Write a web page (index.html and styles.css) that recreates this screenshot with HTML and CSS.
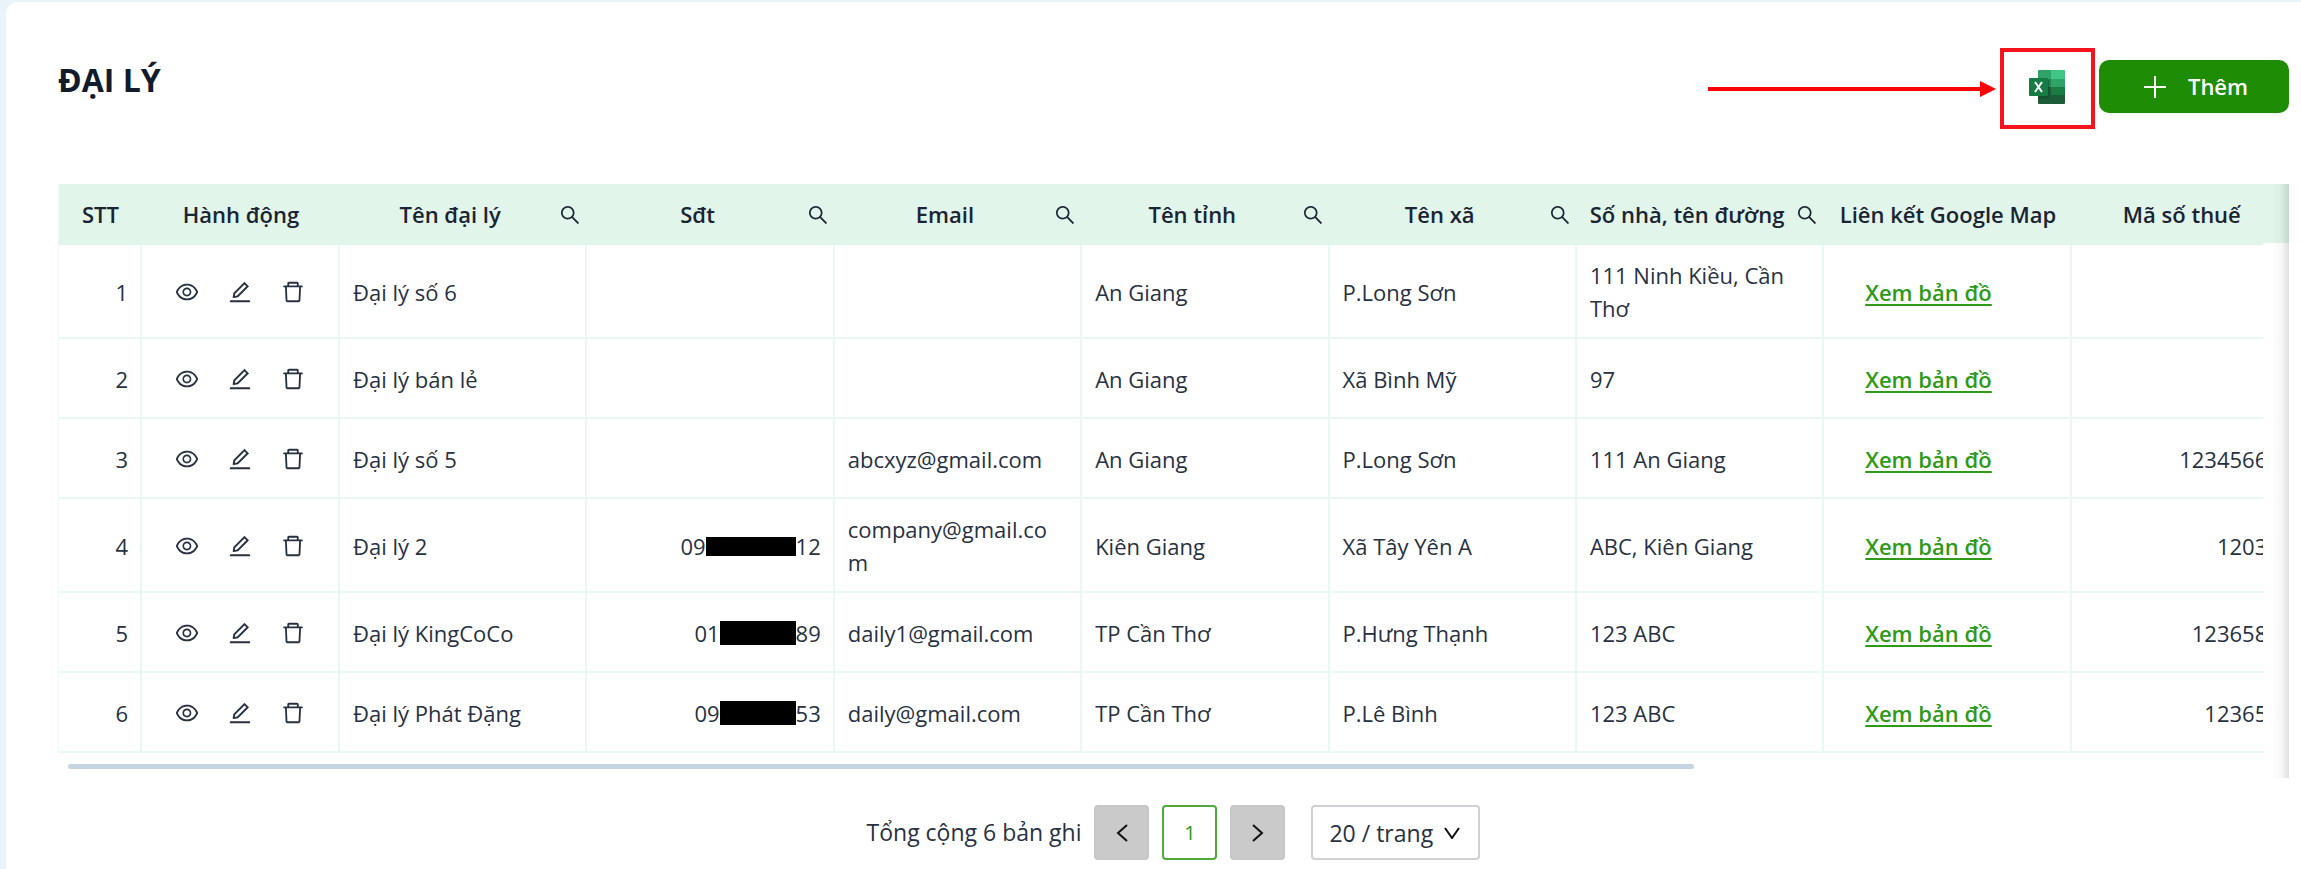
FILE: index.html
```
<!DOCTYPE html>
<html lang="vi">

<head>
    <meta charset="UTF-8">
    <meta name="viewport" content="width=device-width, initial-scale=1.0">
    <title>Đại lý</title>
    <link rel="stylesheet" href="styles.css">
</head>

<body>
    <!-- Icons -->
    <svg class="sprite" xmlns="http://www.w3.org/2000/svg">
        <symbol id="icon-eye" viewBox="0 0 1024 1024">
            <path d="M942.2 486.2C847.4 286.5 704.1 186 512 186c-192.2 0-335.4 100.5-430.2 300.3a60.3 60.3 0 000 51.5C176.6 737.5 319.9 838 512 838c192.2 0 335.4-100.5 430.2-300.3 7.7-16.2 7.7-35 0-51.5zM512 766c-161.3 0-279.4-81.8-362.7-254C232.6 339.8 350.7 258 512 258c161.3 0 279.4 81.8 362.7 254C791.5 684.2 673.4 766 512 766zm-4-430c-97.2 0-176 78.8-176 176s78.8 176 176 176 176-78.8 176-176-78.8-176-176-176zm0 288c-61.9 0-112-50.1-112-112s50.1-112 112-112 112 50.1 112 112-50.1 112-112 112z"/>
        </symbol>
        <symbol id="icon-edit" viewBox="0 0 1024 1024">
            <path d="M257.7 752c2 0 4-.2 6-.5L431.9 722c2-.4 3.9-1.3 5.3-2.8l423.9-423.9a9.96 9.96 0 000-14.1L694.9 114.9c-1.9-1.9-4.4-2.9-7.1-2.9s-5.2 1-7.1 2.9L256.8 538.8c-1.5 1.5-2.4 3.3-2.8 5.3l-29.5 168.2a33.5 33.5 0 009.4 29.8c6.6 6.4 14.9 9.9 23.8 9.9zm67.4-174.4L687.8 215l73.3 73.3-362.7 362.6-88.9 15.7 15.6-89zM880 836H144c-17.7 0-32 14.3-32 32v36c0 4.4 3.6 8 8 8h784c4.4 0 8-3.6 8-8v-36c0-17.7-14.3-32-32-32z"/>
        </symbol>
        <symbol id="icon-delete" viewBox="0 0 1024 1024">
            <path d="M360 184h-8c4.4 0 8-3.6 8-8v8h304v-8c0 4.4 3.6 8 8 8h-8v72h72v-80c0-35.3-28.7-64-64-64H352c-35.3 0-64 28.7-64 64v80h72v-72zm504 72H160c-17.7 0-32 14.3-32 32v32c0 4.4 3.6 8 8 8h60.4l24.7 523c1.6 34.1 29.8 61 63.9 61h454c34.2 0 62.3-26.8 63.9-61l24.7-523H888c4.4 0 8-3.6 8-8v-32c0-17.7-14.3-32-32-32zM731.3 840H292.7l-24.2-512h487l-24.2 512z"/>
        </symbol>
        <symbol id="icon-search" viewBox="112 112 800 800">
            <path d="M909.6 854.5L649.9 594.8C690.2 542.7 712 479 712 412c0-80.2-31.3-155.4-87.9-212.1-56.6-56.7-132-87.9-212.1-87.9s-155.5 31.3-212.1 87.9C143.2 256.5 112 331.8 112 412c0 80.1 31.3 155.5 87.9 212.1C256.5 680.8 331.8 712 412 712c67 0 130.6-21.8 182.7-62l259.7 259.6a8.2 8.2 0 0011.6 0l43.6-43.5a8.2 8.2 0 000-11.6zM570.4 570.4C528 612.7 471.8 636 412 636s-116-23.3-158.4-65.6C211.3 528 188 471.8 188 412s23.3-116.1 65.6-158.4C296 211.3 352.2 188 412 188s116.1 23.2 158.4 65.6S636 352.2 636 412s-23.3 116.1-65.6 158.4z"/>
        </symbol>
    </svg>

    <main class="card">
        <header class="card-header">
            <h1>ĐẠI LÝ</h1>
            <div class="toolbar">
                <svg class="arrow" width="288" height="16" viewBox="0 0 288 16">
                    <path d="M0 6h272V0l16 8-16 8v-6H0z" fill="#ff0000"/>
                </svg>
                <button class="export-button" type="button" aria-label="Xuất Excel">
                    <svg width="36" height="34" viewBox="0 0 36 34">
                        <path d="M10 0h12v9H9V1a1 1 0 0 1 1-1z" fill="#2ea268"/>
                        <path d="M22 0h13a1 1 0 0 1 1 1v8H22z" fill="#3fc584"/>
                        <path d="M9 9h13v8H9z" fill="#1d8650"/>
                        <path d="M22 9h14v8H22z" fill="#30a368"/>
                        <path d="M9 17h13v8H9z" fill="#185b38"/>
                        <path d="M22 17h14v8H22z" fill="#1b7b45"/>
                        <path d="M9 25h27v8a1 1 0 0 1-1 1H10a1 1 0 0 1-1-1z" fill="#1c5c38"/>
                        <path d="M9 9h9a2 2 0 0 1 2 2v16a2 2 0 0 1-2 2H9z" fill="#0f4a2b" opacity=".5"/>
                        <rect y="8" width="19" height="18" rx="1" fill="#177c44"/>
                        <path d="M6 12l7 10M13 12L6 22" stroke="#fff" stroke-width="2"/>
                    </svg>
                </button>
                <button class="add-button" type="button">
                    <svg width="22" height="22" viewBox="0 0 22 22">
                        <path d="M11 0v22M0 11h22" stroke="#fff" stroke-width="2"/>
                    </svg>
                    Thêm
                </button>
            </div>
        </header>

        <div class="table-wrapper">
            <div class="table-scroll">
                <table>
                    <colgroup>
                        <col class="col-index">
                        <col class="col-actions">
                        <col span="8">
                    </colgroup>
                    <thead>
                        <tr>
                            <th>STT</th>
                            <th>Hành động</th>
                            <th><div class="filter"><span>Tên đại lý</span><button type="button" aria-label="Tìm tên đại lý"><svg><use href="#icon-search"/></svg></button></div></th>
                            <th><div class="filter"><span>Sđt</span><button type="button" aria-label="Tìm sđt"><svg><use href="#icon-search"/></svg></button></div></th>
                            <th><div class="filter"><span>Email</span><button type="button" aria-label="Tìm email"><svg><use href="#icon-search"/></svg></button></div></th>
                            <th><div class="filter"><span>Tên tỉnh</span><button type="button" aria-label="Tìm tên tỉnh"><svg><use href="#icon-search"/></svg></button></div></th>
                            <th><div class="filter"><span>Tên xã</span><button type="button" aria-label="Tìm tên xã"><svg><use href="#icon-search"/></svg></button></div></th>
                            <th><div class="filter"><span>Số nhà, tên đường</span><button type="button" aria-label="Tìm địa chỉ"><svg><use href="#icon-search"/></svg></button></div></th>
                            <th>Liên kết Google Map</th>
                            <th><div class="filter"><span>Mã số thuế</span><button type="button" aria-label="Tìm mã số thuế"><svg><use href="#icon-search"/></svg></button></div></th>
                        </tr>
                    </thead>
                    <tbody>
                        <tr>
                            <td class="number">1</td>
                            <td><div class="actions"><button type="button" aria-label="Xem"><svg><use href="#icon-eye"/></svg></button><button type="button" aria-label="Sửa"><svg><use href="#icon-edit"/></svg></button><button type="button" aria-label="Xóa"><svg><use href="#icon-delete"/></svg></button></div></td>
                            <td>Đại lý số 6</td>
                            <td class="number"></td>
                            <td></td>
                            <td>An Giang</td>
                            <td>P.Long Sơn</td>
                            <td>111 Ninh Kiều, Cần Thơ</td>
                            <td class="map"><a href="#">Xem bản đồ</a></td>
                            <td class="number"></td>
                        </tr>
                        <tr>
                            <td class="number">2</td>
                            <td><div class="actions"><button type="button" aria-label="Xem"><svg><use href="#icon-eye"/></svg></button><button type="button" aria-label="Sửa"><svg><use href="#icon-edit"/></svg></button><button type="button" aria-label="Xóa"><svg><use href="#icon-delete"/></svg></button></div></td>
                            <td>Đại lý bán lẻ</td>
                            <td class="number"></td>
                            <td></td>
                            <td>An Giang</td>
                            <td>Xã Bình Mỹ</td>
                            <td>97</td>
                            <td class="map"><a href="#">Xem bản đồ</a></td>
                            <td class="number"></td>
                        </tr>
                        <tr>
                            <td class="number">3</td>
                            <td><div class="actions"><button type="button" aria-label="Xem"><svg><use href="#icon-eye"/></svg></button><button type="button" aria-label="Sửa"><svg><use href="#icon-edit"/></svg></button><button type="button" aria-label="Xóa"><svg><use href="#icon-delete"/></svg></button></div></td>
                            <td>Đại lý số 5</td>
                            <td class="number"></td>
                            <td>abcxyz@gmail.com</td>
                            <td>An Giang</td>
                            <td>P.Long Sơn</td>
                            <td>111 An Giang</td>
                            <td class="map"><a href="#">Xem bản đồ</a></td>
                            <td class="number">1234566000</td>
                        </tr>
                        <tr>
                            <td class="number">4</td>
                            <td><div class="actions"><button type="button" aria-label="Xem"><svg><use href="#icon-eye"/></svg></button><button type="button" aria-label="Sửa"><svg><use href="#icon-edit"/></svg></button><button type="button" aria-label="Xóa"><svg><use href="#icon-delete"/></svg></button></div></td>
                            <td>Đại lý 2</td>
                            <td class="number"><div class="phone">09<span class="mask mask-long"></span>12</div></td>
                            <td>company@gmail.com</td>
                            <td>Kiên Giang</td>
                            <td>Xã Tây Yên A</td>
                            <td>ABC, Kiên Giang</td>
                            <td class="map"><a href="#">Xem bản đồ</a></td>
                            <td class="number">1203000</td>
                        </tr>
                        <tr>
                            <td class="number">5</td>
                            <td><div class="actions"><button type="button" aria-label="Xem"><svg><use href="#icon-eye"/></svg></button><button type="button" aria-label="Sửa"><svg><use href="#icon-edit"/></svg></button><button type="button" aria-label="Xóa"><svg><use href="#icon-delete"/></svg></button></div></td>
                            <td>Đại lý KingCoCo</td>
                            <td class="number"><div class="phone">01<span class="mask"></span>89</div></td>
                            <td>daily1@gmail.com</td>
                            <td>TP Cần Thơ</td>
                            <td>P.Hưng Thạnh</td>
                            <td>123 ABC</td>
                            <td class="map"><a href="#">Xem bản đồ</a></td>
                            <td class="number">123658000</td>
                        </tr>
                        <tr>
                            <td class="number">6</td>
                            <td><div class="actions"><button type="button" aria-label="Xem"><svg><use href="#icon-eye"/></svg></button><button type="button" aria-label="Sửa"><svg><use href="#icon-edit"/></svg></button><button type="button" aria-label="Xóa"><svg><use href="#icon-delete"/></svg></button></div></td>
                            <td>Đại lý Phát Đặng</td>
                            <td class="number"><div class="phone">09<span class="mask"></span>53</div></td>
                            <td>daily@gmail.com</td>
                            <td>TP Cần Thơ</td>
                            <td>P.Lê Bình</td>
                            <td>123 ABC</td>
                            <td class="map"><a href="#">Xem bản đồ</a></td>
                            <td class="number">12365000</td>
                        </tr>
                    </tbody>
                </table>
                <div class="scrollbar"><div class="scrollbar-thumb"></div></div>
            </div>
            <div class="table-edge"></div>
        </div>

        <nav class="pagination" aria-label="Phân trang">
            <span>Tổng cộng 6 bản ghi</span>
            <button class="page-button page-nav" type="button" aria-label="Trang trước">
                <svg width="12" height="18" viewBox="0 0 12 18"><path d="M11 1L2 9l9 8"/></svg>
            </button>
            <button class="page-button page-current" type="button">1</button>
            <button class="page-button page-nav" type="button" aria-label="Trang sau">
                <svg width="12" height="18" viewBox="0 0 12 18"><path d="M1 1l9 8-9 8"/></svg>
            </button>
            <div class="page-size">
                <select aria-label="Số bản ghi mỗi trang">
                    <option>20 / trang</option>
                </select>
                <svg width="16" height="12" viewBox="0 0 16 12"><path d="M1 1l7 10 7-10"/></svg>
            </div>
        </nav>
    </main>
</body>

</html>
```
FILE: styles.css
```
* {
    box-sizing: border-box;
}

body {
    margin: 0;
    padding: 2px 0 0 6px;
    min-height: 100vh;
    display: flex;
    background-color: #e8f3fa;
    color: #273142;
    font-family: "Open Sans", "Noto Sans", sans-serif;
    font-size: 22px;
    line-height: 33px;
}

button,
select {
    font: inherit;
    color: inherit;
    cursor: pointer;
}

button {
    padding: 0;
    border: none;
    background: none;
}

svg {
    display: block;
    fill: currentColor;
}

.sprite {
    position: absolute;
    width: 0;
    height: 0;
}

.card {
    flex: 1;
    min-width: 0;
    padding: 46px 12px 8px 52px;
    border-radius: 12px 0 0 0;
    background-color: #fff;
}

.card-header {
    display: flex;
    justify-content: space-between;
    margin-bottom: 55px;
}

h1 {
    margin: 12px 0 0;
    color: #111b2b;
    font-size: 32px;
    font-weight: 700;
    line-height: 40px;
}

.toolbar {
    display: flex;
    align-items: center;
    gap: 4px;
}

.export-button {
    display: flex;
    align-items: center;
    justify-content: center;
    width: 95px;
    height: 81px;
    border: 4px solid #f5141e;
    padding: 0 2px 4px 0;
}

.add-button {
    display: flex;
    align-items: center;
    justify-content: center;
    gap: 22px;
    width: 190px;
    height: 53px;
    margin-bottom: 4px;
    padding-left: 4px;
    border-radius: 10px;
    background-color: #1e8c05;
    box-shadow: 0 3px 2px rgba(0, 0, 0, 0.04);
    color: #fff;
    font-weight: 600;
}

/* Table */
.table-wrapper {
    display: flex;
    margin-bottom: 27px;
}

.table-scroll {
    flex: 1;
    min-width: 0;
    overflow: hidden;
}

.table-edge {
    width: 26px;
    background: linear-gradient(to right, rgba(0, 0, 0, 0) 35%, rgba(0, 0, 0, 0.03) 70%, rgba(0, 0, 0, 0.12)), linear-gradient(#e1f5ea, #e1f5ea) top / 100% 59px no-repeat;
}

table {
    width: 2261px;
    table-layout: fixed;
    border-collapse: separate;
    border-spacing: 0;
    border-left: 1px solid #eef9f5;
}

.col-index {
    width: 83px;
}

.col-actions {
    width: 198px;
}

th {
    height: 61px;
    padding: 0 8px;
    background-color: #e1f5ea;
    color: #1a2433;
    font-weight: 600;
    white-space: nowrap;
}

td {
    height: 80px;
    padding: 14px 14px 12px 13px;
    border-right: 2px solid #e9f8f2;
    border-bottom: 2px solid #e9f8f2;
    overflow-wrap: anywhere;
}

.number {
    padding-right: 12px;
    text-align: right;
}

.filter {
    display: flex;
    align-items: center;
    gap: 12px;
    padding-left: 3px;
}

.filter span {
    flex: 1;
}

.filter svg {
    width: 18px;
    height: 18px;
}

.actions {
    display: flex;
    justify-content: center;
    gap: 27px;
}

.actions svg {
    width: 26px;
    height: 26px;
}

.phone {
    display: flex;
    align-items: center;
    justify-content: flex-end;
}

.mask {
    width: 76px;
    height: 24px;
    background-color: #000;
}

.mask-long {
    width: 90px;
    height: 19px;
}

.map {
    padding-left: 41px;
}

.map a {
    color: #2f9a17;
    font-weight: 600;
    text-underline-offset: 3px;
}

.scrollbar {
    padding: 11px 10px 9px;
}

.scrollbar-thumb {
    width: 74.4%;
    height: 5px;
    border-radius: 3px;
    background-color: #c5d4e1;
}

/* Pagination */
.pagination {
    display: flex;
    align-items: center;
    justify-content: center;
    gap: 13px;
    font-size: 23px;
}

.page-button {
    display: flex;
    align-items: center;
    justify-content: center;
    width: 55px;
    height: 55px;
    border: 2px solid #c6c6cb;
    border-radius: 4px;
}

.page-button path,
.page-size path {
    fill: none;
    stroke: #111;
    stroke-width: 2;
}

.page-nav {
    background-color: #cacaca;
}

.page-current {
    border-color: #4dab3c;
    color: #2f9a17;
    font-size: 20px;
}

.page-size {
    display: grid;
    align-items: center;
    margin-left: 13px;
}

.page-size select,
.page-size svg {
    grid-area: 1 / 1;
}

.page-size select {
    width: 169px;
    height: 55px;
    padding: 2px 16px 0;
    border: 2px solid #cfcfd6;
    border-radius: 4px;
    background-color: #fff;
    appearance: none;
}

.page-size svg {
    justify-self: end;
    margin-right: 20px;
    pointer-events: none;
}
```
